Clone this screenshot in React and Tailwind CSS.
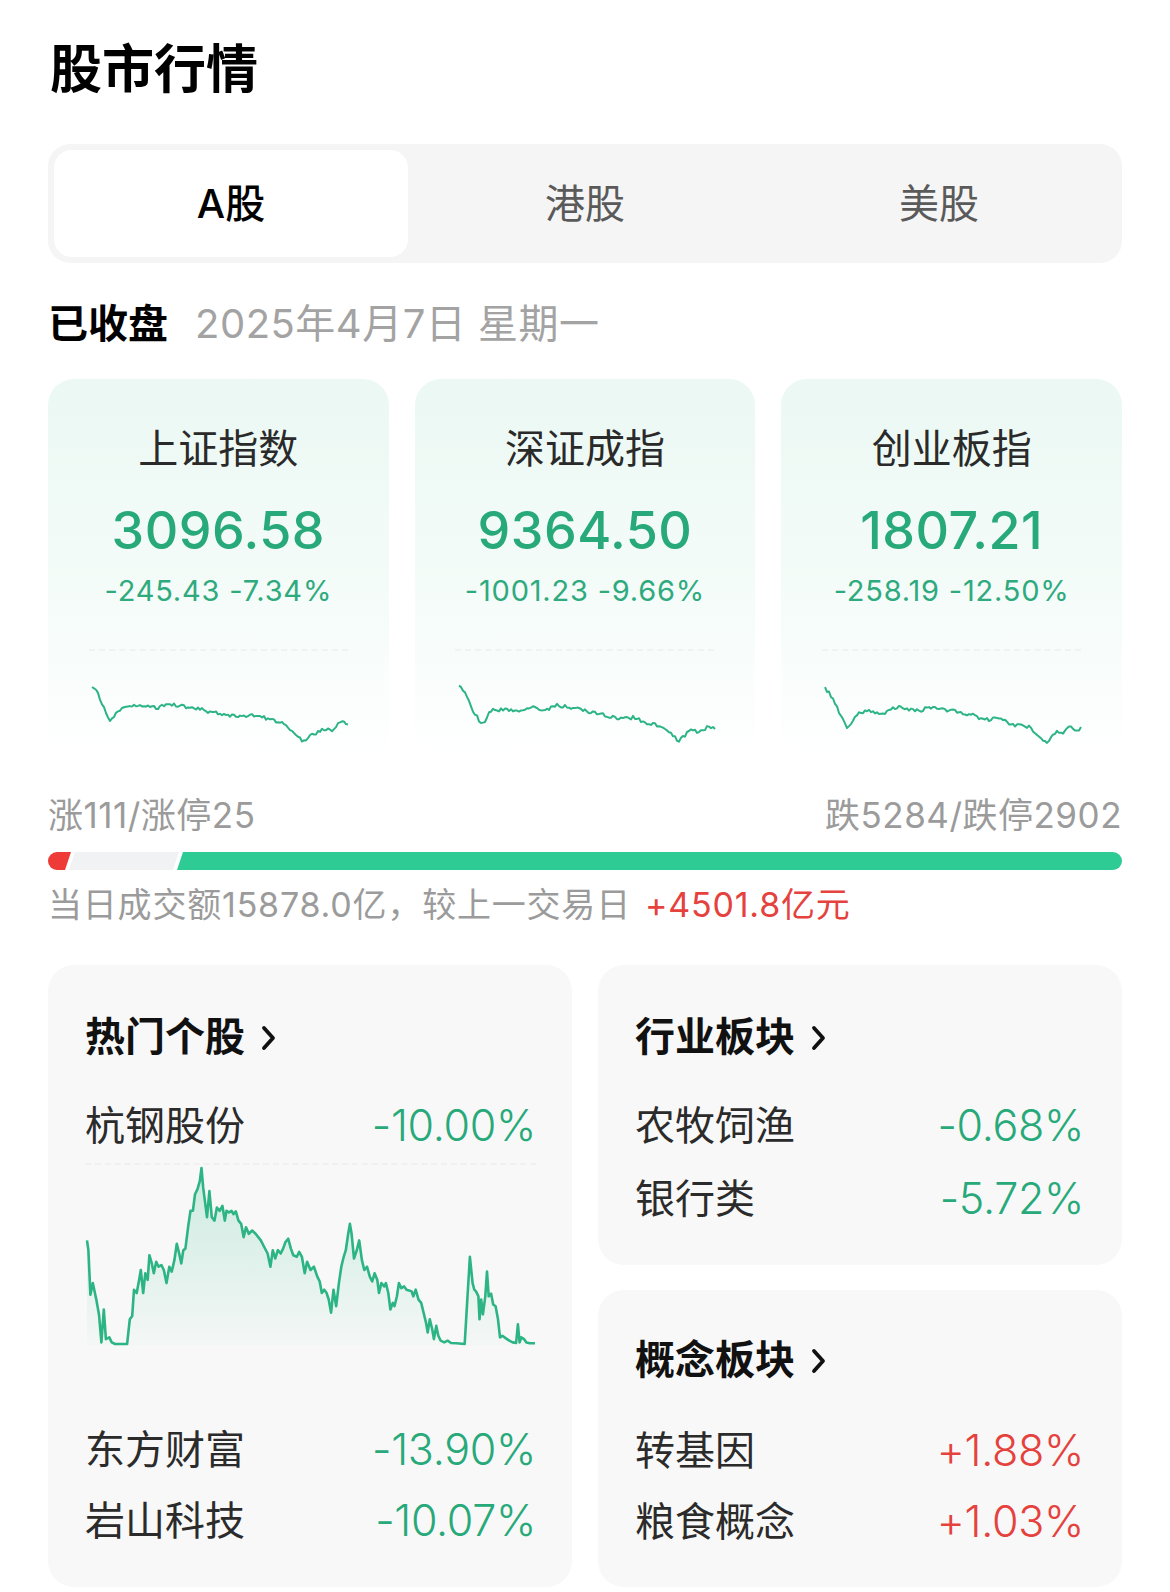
import React from "react";

function mulberry32(a) {
  return function () {
    a |= 0;
    a = (a + 0x6d2b79f5) | 0;
    let t = Math.imul(a ^ (a >>> 15), 1 | a);
    t = (t + Math.imul(t ^ (t >>> 7), 61 | t)) ^ t;
    return ((t ^ (t >>> 14)) >>> 0) / 4294967296;
  };
}

function sparkPath(anchors, w, h, seed, noise = 0.05, step = 2, pad = 3) {
  const rnd = mulberry32(seed);
  const pts = [];
  for (let x = 0; x <= w; x += step) {
    const t = x / w;
    let i = 0;
    while (i < anchors.length - 2 && anchors[i + 1][0] < t) i++;
    const [t0, y0] = anchors[i];
    const [t1, y1] = anchors[i + 1];
    const f = t1 === t0 ? 0 : (t - t0) / (t1 - t0);
    let y = y0 + (y1 - y0) * f + (rnd() - 0.5) * noise;
    y = Math.max(0, Math.min(1, y));
    pts.push([x + pad, pad + y * (h - pad * 2)]);
  }
  return pts.map((p, i) => (i ? "L" : "M") + p[0].toFixed(1) + " " + p[1].toFixed(1)).join(" ");
}

const SH = [[0,0.05],[0.02,0.1],[0.04,0.35],[0.07,0.62],[0.1,0.45],[0.14,0.38],[0.2,0.35],[0.25,0.4],[0.3,0.33],[0.36,0.38],[0.42,0.42],[0.5,0.5],[0.58,0.55],[0.62,0.5],[0.7,0.6],[0.76,0.68],[0.82,0.95],[0.86,0.85],[0.9,0.75],[0.94,0.78],[0.97,0.62],[1,0.68]];
const SZ = [[0,0.05],[0.02,0.12],[0.05,0.4],[0.09,0.7],[0.12,0.45],[0.17,0.42],[0.22,0.45],[0.28,0.38],[0.34,0.43],[0.38,0.35],[0.46,0.42],[0.55,0.5],[0.62,0.58],[0.68,0.56],[0.74,0.65],[0.8,0.72],[0.86,0.95],[0.9,0.78],[0.94,0.8],[0.97,0.72],[1,0.75]];
const CY = [[0,0.05],[0.03,0.25],[0.06,0.5],[0.09,0.75],[0.12,0.5],[0.17,0.45],[0.22,0.5],[0.28,0.38],[0.36,0.45],[0.42,0.38],[0.5,0.45],[0.58,0.52],[0.62,0.6],[0.68,0.58],[0.74,0.68],[0.8,0.72],[0.84,0.9],[0.87,0.98],[0.9,0.8],[0.93,0.85],[0.95,0.7],[0.98,0.8],[1,0.74]];

const BIG = [[133,350],[137,380],[143,515],[150,480],[160,530],[168,575],[175,660],[182,560],[188,650],[198,645],[205,660],[215,665],[250,665],[258,590],[265,580],[270,500],[278,510],[285,470],[290,440],[297,510],[303,450],[310,470],[315,395],[322,420],[328,450],[335,415],[342,430],[350,425],[357,440],[365,480],[373,430],[380,445],[388,410],[395,360],[402,390],[408,420],[414,380],[420,375],[428,310],[435,260],[442,260],[448,210],[455,195],[462,170],[467,130],[472,190],[477,230],[483,280],[490,200],[497,280],[505,290],[512,250],[520,260],[528,245],[535,290],[540,260],[547,265],[555,260],[560,270],[567,262],[575,290],[583,300],[590,340],[597,310],[605,330],[615,320],[625,330],[640,350],[650,370],[660,390],[668,430],[675,380],[682,405],[690,380],[698,390],[705,375],[712,355],[720,345],[728,375],[735,395],[745,400],[752,385],[760,400],[768,450],[775,415],[785,440],[795,430],[805,460],[812,475],[818,510],[825,500],[832,510],[838,530],[845,570],[852,500],[860,550],[868,480],[875,430],[882,400],[888,380],[895,330],[900,300],[905,330],[912,405],[920,380],[927,350],[935,410],[942,440],[950,430],[958,460],[965,475],[972,450],[980,470],[985,510],[992,480],[1000,490],[1005,480],[1012,510],[1018,560],[1025,540],[1030,550],[1037,520],[1043,480],[1050,495],[1058,490],[1065,500],[1072,502],[1080,505],[1085,520],[1092,500],[1100,530],[1108,540],[1115,570],[1122,600],[1127,630],[1133,590],[1140,620],[1145,650],[1152,610],[1158,640],[1165,655],[1175,660],[1185,655],[1195,662],[1210,663],[1235,665],[1243,520],[1250,400],[1258,480],[1263,500],[1268,505],[1275,520],[1278,590],[1283,530],[1288,575],[1295,520],[1300,445],[1305,520],[1312,512],[1318,545],[1325,550],[1332,590],[1338,645],[1345,640],[1355,648],[1365,655],[1375,660],[1385,662],[1390,605],[1395,660],[1400,645],[1408,650],[1415,660],[1425,663],[1440,663]];

function BigChart() {
  const W = 452, H = 180, pad = 2;
  const pts = BIG.map(([x, y]) => [pad + ((x - 133) / (1440 - 133)) * (W - pad * 2), pad + ((y - 130) / (665 - 130)) * (H - pad * 2)]);
  const line = pts.map((p, i) => (i ? "L" : "M") + p[0].toFixed(1) + " " + p[1].toFixed(1)).join(" ");
  const area = line + ` L ${pts[pts.length - 1][0].toFixed(1)} ${H} L ${pts[0][0].toFixed(1)} ${H} Z`;
  return (
    <svg width={W} height={H} viewBox={`0 0 ${W} ${H}`} className="block">
      <defs>
        <linearGradient id="bigfill" x1="0" y1="0" x2="0" y2="1">
          <stop offset="0" stopColor="#2dbb8a" stopOpacity="0.22" />
          <stop offset="1" stopColor="#2dbb8a" stopOpacity="0.02" />
        </linearGradient>
      </defs>
      <path d={area} fill="url(#bigfill)" />
      <path d={line} fill="none" stroke="#2db485" strokeWidth="2.6" strokeLinejoin="round" />
    </svg>
  );
}

function Spark({ anchors, seed }) {
  const d = sparkPath(anchors, 256, 66, seed, 0.06, 2, 3);
  return (
    <svg width="262" height="66" viewBox="0 0 262 66" className="block">
      <path d={d} fill="none" stroke="#2db485" strokeWidth="2" strokeLinejoin="round" />
    </svg>
  );
}

function Chevron() {
  return (
    <svg width="20" height="30" viewBox="0 0 20 30" className="ml-[13px] mt-[2px]">
      <path d="M6 5 L15 15 L6 25" fill="none" stroke="#111" strokeWidth="3.8" strokeLinecap="round" strokeLinejoin="round" />
    </svg>
  );
}

function IndexCard({ name, value, change, anchors, seed }) {
  return (
    <div className="h-[381px] rounded-[26px] bg-gradient-to-b from-[#ebf8f3] via-[#f5fcf9] via-60% to-white flex flex-col items-center pt-[45px]">
      <div className="text-[40px] leading-[49px] text-[#2a2a2a]">{name}</div>
      <div className="mt-[27px] text-[52px] leading-[61px] font-medium text-[#27a97a] tracking-[0.5px]">{value}</div>
      <div className="mt-[11px] text-[29px] leading-[37px] text-[#2eaa7e] tracking-[0.8px]">{change}</div>
      <div className="mt-[40px] w-[259px] border-t-2 border-dashed border-[#f0f3f1]" />
      <div className="mt-[30px] w-full pl-[41px]">
        <Spark anchors={anchors} seed={seed} />
      </div>
    </div>
  );
}

function Row({ name, value, up }) {
  return (
    <div className="flex items-center justify-between h-[53px]">
      <span className="text-[40px] leading-[53px] text-[#2b2b2b]">{name}</span>
      <span className={`text-[43px] leading-[53px] font-light tracking-[-0.3px] ${up ? "text-[#e5413d]" : "text-[#27a97a]"}`}>{value}</span>
    </div>
  );
}

function CardTitle({ children }) {
  return (
    <div className="flex items-center h-[49px]">
      <span className="text-[40px] leading-[49px] font-bold text-[#111]">{children}</span>
      <Chevron />
    </div>
  );
}

export default function App() {
  return (
    <div className="bg-white px-[48px] pt-[39px] font-['Inter','Noto_Sans_CJK_SC',sans-serif]">
      <h1 className="text-[52px] leading-[61px] font-bold text-black pl-[2px]">股市行情</h1>

      <div className="mt-[44px] h-[119px] rounded-[22px] bg-[#f5f5f5] p-[6px] grid grid-cols-3">
        <div className="rounded-[18px] bg-white flex items-center justify-center text-[40px] font-medium text-black">A股</div>
        <div className="flex items-center justify-center text-[40px] text-[#5a5a5a]">港股</div>
        <div className="flex items-center justify-center text-[40px] text-[#5a5a5a]">美股</div>
      </div>

      <div className="mt-[35px] flex items-center h-[51px]">
        <span className="text-[40px] font-bold text-black">已收盘</span>
        <span className="ml-[27px] text-[40px] tracking-[0.5px] text-[#a3a3a3]">2025年4月7日 星期一</span>
      </div>

      <div className="mt-[30px] grid grid-cols-3 gap-[26px]">
        <IndexCard name="上证指数" value="3096.58" change="-245.43 -7.34%" anchors={SH} seed={11} />
        <IndexCard name="深证成指" value="9364.50" change="-1001.23 -9.66%" anchors={SZ} seed={23} />
        <IndexCard name="创业板指" value="1807.21" change="-258.19 -12.50%" anchors={CY} seed={37} />
      </div>

      <div className="mt-[35px] flex items-center justify-between h-[41px] text-[35px] tracking-[0.5px] text-[#9b9b9b]">
        <span>涨111/涨停25</span>
        <span>跌5284/跌停2902</span>
      </div>

      <div className="mt-[16px] h-[18px]">
        <svg width="1074" height="18" viewBox="0 0 1074 18" className="block">
          <path d="M9 0 L23 0 L17 18 L9 18 A9 9 0 0 1 9 0 Z" fill="#ee3b37" />
          <path d="M27 0 L131 0 L125 18 L21 18 Z" fill="#f0f2f4" />
          <path d="M135 0 L1065 0 A9 9 0 0 1 1065 18 L129 18 Z" fill="#2ecb95" />
        </svg>
      </div>

      <div className="mt-[14px] h-[41px] flex items-center text-[34px] tracking-[0.8px] text-[#9b9b9b]">
        <span>当日成交额15878.0亿，较上一交易日</span>
        <span className="ml-[14px] text-[#e5413d]">+4501.8亿元</span>
      </div>

      <div className="mt-[40px] grid grid-cols-2 gap-[26px]">
        <div className="h-[622px] rounded-[26px] bg-[#f8f8f8] pl-[37px] pr-[36px] pt-[47px]">
          <CardTitle>热门个股</CardTitle>
          <div className="mt-[38px]">
            <Row name="杭钢股份" value="-10.00%" />
          </div>
          <div className="mt-[11px] border-t-2 border-dashed border-[#f0f0f0]" />
          <div className="mt-[1px]">
            <BigChart />
          </div>
          <div className="mt-[77px] flex flex-col gap-[18px]">
            <Row name="东方财富" value="-13.90%" />
            <Row name="岩山科技" value="-10.07%" />
          </div>
        </div>

        <div className="flex flex-col gap-[25px]">
          <div className="h-[300px] rounded-[26px] bg-[#f8f8f8] pl-[37px] pr-[38px] pt-[47px]">
            <CardTitle>行业板块</CardTitle>
            <div className="mt-[38px] flex flex-col gap-[20px]">
              <Row name="农牧饲渔" value="-0.68%" />
              <Row name="银行类" value="-5.72%" />
            </div>
          </div>
          <div className="h-[297px] rounded-[26px] bg-[#f8f8f8] pl-[37px] pr-[38px] pt-[45px]">
            <CardTitle>概念板块</CardTitle>
            <div className="mt-[40px] flex flex-col gap-[18px]">
              <Row name="转基因" value="+1.88%" up />
              <Row name="粮食概念" value="+1.03%" up />
            </div>
          </div>
        </div>
      </div>
    </div>
  );
}
